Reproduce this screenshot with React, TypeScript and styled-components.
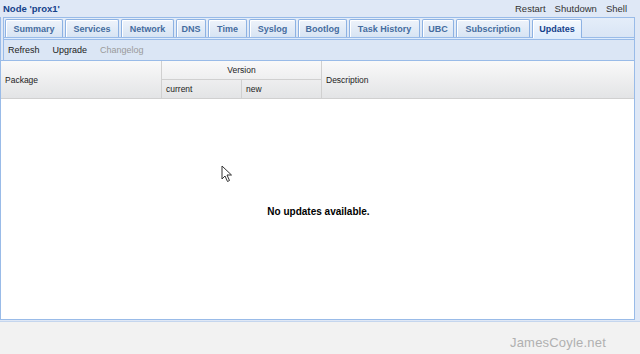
import styled, { createGlobalStyle } from 'styled-components';

const GlobalStyle = createGlobalStyle`
  html, body {
    margin: 0;
    padding: 0;
    background: #f2f2f2;
  }
  body {
    font-family: 'Liberation Sans', Arial, sans-serif;
  }
`;

const Page = styled.div`
  width: 640px;
  height: 354px;
  display: flex;
  flex-direction: column;
  position: relative;
  overflow: hidden;
`;

const NodePanel = styled.div`
  height: 322px;
  background: #dfe8f6;
  display: flex;
  flex-direction: column;
  box-sizing: border-box;
  border-bottom: 1px solid #c5d6ee;
`;

const TitleBar = styled.div`
  height: 17px;
  display: flex;
  align-items: center;
  justify-content: space-between;
  padding: 0 13px 0 3px;
  font-size: 9.5px;
`;

const Title = styled.span`
  font-weight: bold;
  color: #15428b;
`;

const TitleActions = styled.div`
  display: flex;
  gap: 9px;
  color: #333;
`;

const TabPanel = styled.div`
  flex: 1;
  margin: 0 5px 1px 0;
  display: flex;
  flex-direction: column;
  border: 1px solid #99bbe8;
  border-top: none;
  min-height: 0;
`;

const TabStrip = styled.div`
  display: flex;
  gap: 2px;
  padding: 1px 0 0 1px;
  border-top: 1px solid #99bbe8;
  margin-left: 2px;
  background: linear-gradient(#e4edf9, #d9e5f5);
  border-bottom: 1px solid #99bbe8;
  height: 18px;
  box-sizing: content-box;
  border-left: 1px solid #99bbe8;
`;

const Tab = styled.div<{ $active?: boolean; $w: number }>`
  width: ${({ $w }) => $w}px;
  height: ${({ $active }) => ($active ? 19 : 18)}px;
  box-sizing: border-box;
  border: 1px solid #8db2e3;
  border-bottom: none;
  border-radius: 2px 2px 0 0;
  background: ${({ $active }) =>
    $active ? 'linear-gradient(#f4f8fd, #deecfd)' : 'linear-gradient(#eef3fb, #d7e4f3)'};
  color: ${({ $active }) => ($active ? '#15428b' : '#456c9f')};
  font-size: 9px;
  font-weight: bold;
  display: flex;
  align-items: center;
  justify-content: center;
  box-shadow: inset 1px 1px 0 #fff;
  position: relative;
  z-index: ${({ $active }) => ($active ? 1 : 0)};
`;

const StripEdge = styled.div`
  height: 1px;
  background: #deecfd;
  border-bottom: 1px solid #99bbe8;
  margin-left: 2px;
  border-left: 1px solid #99bbe8;
`;

const Toolbar = styled.div`
  height: 20px;
  display: flex;
  align-items: center;
  gap: 13px;
  padding-left: 4px;
  font-size: 9px;
  background: #dbe6f5;
  border-left: 1px solid #99bbe8;
  margin-left: 2px;
`;

const ToolButton = styled.span<{ $disabled?: boolean }>`
  color: ${({ $disabled }) => ($disabled ? '#9a9a9a' : '#222')};
`;

const Grid = styled.div`
  flex: 1;
  display: flex;
  flex-direction: column;
  border-top: 1px solid #99bbe8;
  background: #fff;
  min-height: 0;
`;

const HeaderRow = styled.div`
  height: 37px;
  display: grid;
  grid-template-columns: 161px 80px 80px 1fr;
  grid-template-rows: 19px 18px;
  background: linear-gradient(#f9f9f9, #e3e4e6);
  border-bottom: 1px solid #d0d0d0;
  font-size: 8.5px;
  color: #222;
`;

const HeaderCell = styled.div<{ $center?: boolean }>`
  display: flex;
  align-items: center;
  justify-content: ${({ $center }) => ($center ? 'center' : 'flex-start')};
  padding-left: ${({ $center }) => ($center ? 0 : 4)}px;
  border-right: 1px solid #d0d0d0;
`;

const PackageCell = styled(HeaderCell)`
  grid-row: 1 / 3;
  grid-column: 1;
`;

const VersionCell = styled(HeaderCell)`
  grid-row: 1;
  grid-column: 2 / 4;
  border-bottom: 1px solid #d0d0d0;
`;

const SubCell = styled(HeaderCell)<{ $col: number }>`
  grid-row: 2;
  grid-column: ${({ $col }) => $col};
`;

const DescriptionCell = styled(HeaderCell)`
  grid-row: 1 / 3;
  grid-column: 4;
  border-right: none;
`;

const GridBody = styled.div`
  flex: 1;
  display: flex;
  align-items: center;
  justify-content: center;
  padding-left: 2px;
  padding-top: 4px;
`;

const EmptyText = styled.span`
  font-size: 10px;
  font-weight: bold;
  color: #000;
`;

const Footer = styled.div`
  flex: 1;
  background: #f2f2f2;
  display: flex;
  justify-content: flex-end;
  align-items: center;
  padding: 8px 34px 0 0;
`;

const Watermark = styled.span`
  font-size: 13px;
  color: #b0b0b0;
  letter-spacing: 0.2px;
`;

const Cursor = styled.svg`
  position: absolute;
  left: 221px;
  top: 165px;
`;

const tabs: [string, number][] = [
  ['Summary', 58],
  ['Services', 54],
  ['Network', 53],
  ['DNS', 30],
  ['Time', 39],
  ['Syslog', 47],
  ['Bootlog', 49],
  ['Task History', 71],
  ['UBC', 32],
  ['Subscription', 74],
  ['Updates', 50],
];

export default function App() {
  return (
    <Page>
      <GlobalStyle />
      <NodePanel>
        <TitleBar>
          <Title>Node 'prox1'</Title>
          <TitleActions>
            <span>Restart</span>
            <span>Shutdown</span>
            <span>Shell</span>
          </TitleActions>
        </TitleBar>
        <TabPanel>
          <TabStrip>
            {tabs.map(([label, w]) => (
              <Tab key={label} $w={w} $active={label === 'Updates'}>
                {label}
              </Tab>
            ))}
          </TabStrip>
          <StripEdge />
          <Toolbar>
            <ToolButton>Refresh</ToolButton>
            <ToolButton>Upgrade</ToolButton>
            <ToolButton $disabled>Changelog</ToolButton>
          </Toolbar>
          <Grid>
            <HeaderRow>
              <PackageCell>Package</PackageCell>
              <VersionCell $center>Version</VersionCell>
              <SubCell $col={2}>current</SubCell>
              <SubCell $col={3}>new</SubCell>
              <DescriptionCell>Description</DescriptionCell>
            </HeaderRow>
            <GridBody>
              <EmptyText>No updates available.</EmptyText>
            </GridBody>
          </Grid>
        </TabPanel>
      </NodePanel>
      <Footer>
        <Watermark>JamesCoyle.net</Watermark>
      </Footer>
      <Cursor width="12" height="18" viewBox="0 0 12 18">
        <path
          d="M1 1 L1 14 L4 11 L6.5 16.5 L8.5 15.5 L6 10 L10.5 10 Z"
          fill="#fff"
          stroke="#333"
          strokeWidth="1"
          strokeLinejoin="round"
        />
      </Cursor>
    </Page>
  );
}
